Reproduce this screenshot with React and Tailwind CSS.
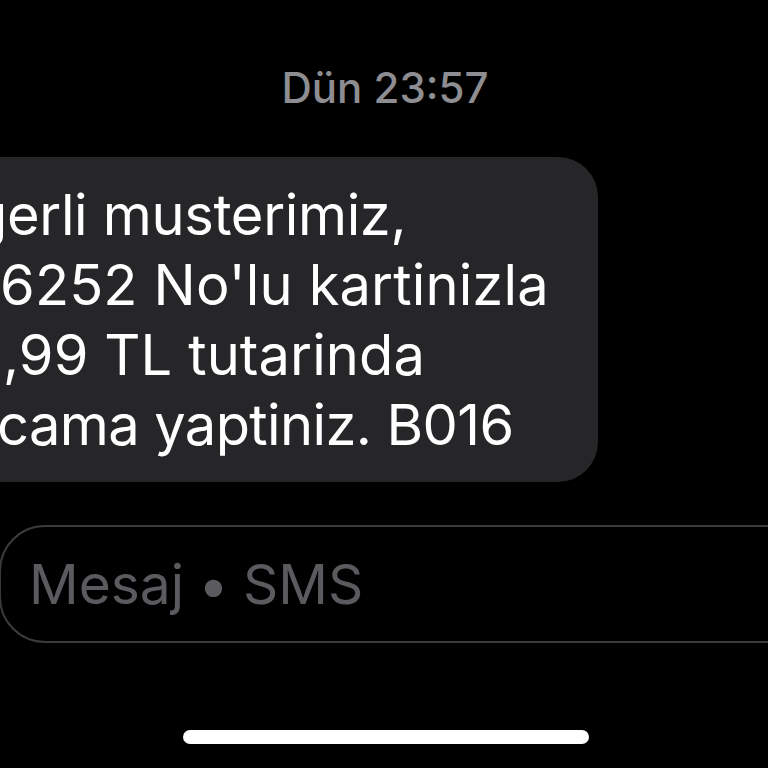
import React from 'react';

const inter = { fontFamily: "Inter, 'Noto Sans', 'Liberation Sans', sans-serif" };

// visible part of the SMS; the screenshot is cropped on the left, so the
// first letter of some lines only shows as a sliver
const lines = [
  { cut: 'g', sliver: 'w-[7px]', text: 'erli musterimiz,', shift: 'ml-0 tracking-[-0.35px]' },
  { cut: '', sliver: 'w-0', text: '6252 No\'lu kartinizla', shift: 'ml-0 tracking-[0.15px]' },
  { cut: '4', sliver: 'w-[3px]', text: ',99 TL tutarinda', shift: 'ml-0 tracking-[0.1px]' },
  { cut: '', sliver: 'w-0', text: 'cama yaptiniz. B016', shift: 'ml-[-3px] tracking-[-0.6px]' },
];

export default function App() {
  return (
    <div style={inter} className="w-[768px] h-[768px] bg-black overflow-hidden flex flex-col">
      {/* Timestamp */}
      <div className="pt-[67px] text-center text-[42px] leading-none font-medium text-[#8d8d92] pl-[2px]">
        Dün 23:57
      </div>

      {/* Incoming bubble */}
      <div className="mt-[48px] w-[598px] rounded-r-[40px] bg-[#262628] pt-[23px] pb-[22px] overflow-hidden">
        {lines.map((l) => (
          <div key={l.text} className={`flex whitespace-nowrap text-[56px] leading-[70px] text-white ${l.shift}`}>
            <span className={`flex justify-end overflow-hidden ${l.sliver}`}>
              <span>{l.cut}</span>
            </span>
            <span>{l.text}</span>
          </div>
        ))}
      </div>

      {/* Message input */}
      <div className="mt-[43px] ml-[-1px] w-[820px] h-[118px] rounded-[46px] border-2 border-[#3a3a3c] flex items-center gap-[14px] pl-[28px] text-[55px] leading-none text-[#5b5b5f]">
        <span>Mesaj</span>
        <span>•</span>
        <span>SMS</span>
      </div>

      {/* Home indicator */}
      <div className="mt-[87px] flex justify-center pl-[3px]">
        <div className="w-[406px] h-[14px] rounded-full bg-white" />
      </div>
    </div>
  );
}
